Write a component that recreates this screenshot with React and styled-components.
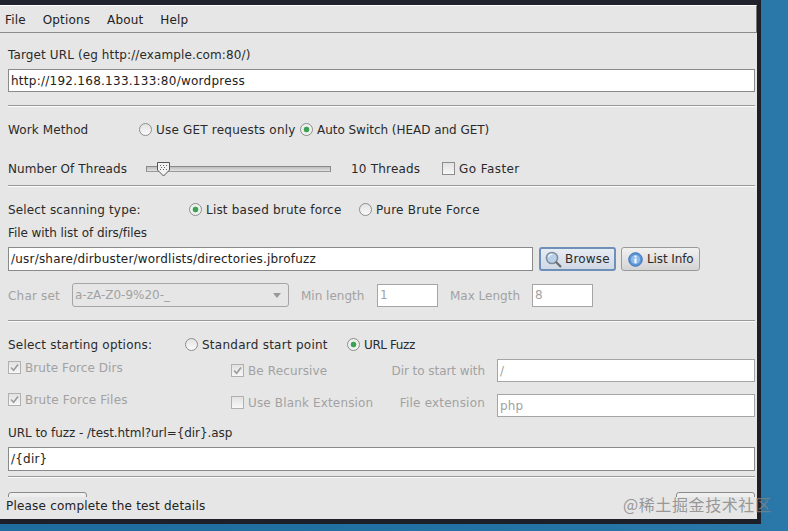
import React from "react";
import styled, { createGlobalStyle } from "styled-components";

const Global = createGlobalStyle`
  html, body { margin: 0; height: 100%; overflow: hidden; background: #2272a5; }
  body { font-family: "DejaVu Sans", sans-serif; font-size: 12px; color: #222; }
`;

const Desktop = styled.div`
  width: 788px; height: 531px; overflow: hidden;
  background: linear-gradient(90deg, #1f6c9e 0%, #2272a5 60%, #2a78a8 100%);
`;
const Frame = styled.div`
  position: relative;
  width: 757px; height: 514px; overflow: hidden;
  border-top: 5px solid #21232f;
  border-bottom: 5px solid #1d2029;
  border-right: 4px solid #1d2029;
  background: #e6e6e6;
  display: flex; flex-direction: column;
`;
const MenuBar = styled.div`
  height: 28px; box-sizing: border-box; flex: none;
  background: #e6e6e6;
  border-top: 1px solid #fff;
  border-bottom: 1px solid #8c8c8c;
  border-right: 1px solid #777;
  display: flex; align-items: center; gap: 17px; padding: 2px 0 0 5px;
  letter-spacing: 0.15px;
`;
const Content = styled.div`
  display: flex; flex-direction: column; padding: 0 2px 0 8px; flex: none;
`;
const Row = styled.div`
  display: flex; align-items: center; flex: none;
  height: ${p => p.$h || 20}px;
  margin-top: ${p => p.$mt || 0}px;
`;
const Text = styled.span`
  box-sizing: content-box;
  white-space: pre;
  padding-top: ${p => p.$pt ?? 2}px;
  letter-spacing: ${p => p.$ls ?? 0.2}px;
  color: ${p => (p.$off ? "#a2a2a2" : "#2a2a2a")};
  width: ${p => (p.$w ? `${p.$w}px` : "auto")};
  margin-left: ${p => (p.$auto ? "auto" : `${p.$ml || 0}px`)};
  padding-right: ${p => p.$pr || 0}px;
  flex: none;
`;
const Field = styled.div`
  box-sizing: border-box; height: ${p => p.$h || 24}px;
  width: ${p => (p.$w ? `${p.$w}px` : "100%")};
  flex: ${p => (p.$w ? "none" : "1")};
  background: #fff;
  border: 1px solid ${p => (p.$off ? "#a5a5a5" : "#8a8a8a")};
  color: ${p => (p.$off ? "#a2a2a2" : "#222")};
  padding-left: 2px;
  display: flex; align-items: center;
  white-space: pre; letter-spacing: ${p => p.$ls ?? 0.2}px;
`;
const Sep = styled.div`
  height: 2px; flex: none;
  margin-top: ${p => p.$mt || 0}px;
  background: linear-gradient(#999 50%, #fbfbfb 50%);
`;
const Radio = styled.span`
  box-sizing: border-box; width: 13px; height: 13px; border-radius: 50%;
  flex: none; margin-right: 4px;
  border: 1px solid #8d8d8d;
  background: ${p => p.$on
    ? "radial-gradient(circle, #3f9f55 0 2.5px, #e9f1ea 3.2px, #f3f3f3 100%)"
    : "linear-gradient(#e3e3e3, #fafafa)"};
`;
const Check = styled.span`
  box-sizing: border-box; width: 13px; height: 13px; flex: none; margin-right: 4px;
  border: 1px solid ${p => (p.$off ? "#b0b0b0" : "#8d8d8d")};
  background: linear-gradient(#e2e2e2, #f7f7f7);
  display: flex; align-items: center; justify-content: center;
`;
const Track = styled.div`
  position: relative; box-sizing: border-box; width: 185px; height: 6px; flex: none;
  border: 1px solid #8a8a8a; border-bottom-color: #9a9a9a;
  background: linear-gradient(#bdbdbd, #e2e2e2);
  margin: 1px 20px 0 0;
`;
const ThumbSpot = styled.span`
  position: absolute; left: 9px; top: -6px; display: block; line-height: 0;
`;
const Combo = styled.div`
  box-sizing: border-box; width: 217px; height: 24px; flex: none;
  border: 1px solid #a5a5a5; border-radius: 3px;
  background: #e6e6e6; color: #a2a2a2;
  display: flex; align-items: center; justify-content: space-between;
  padding: 0 7px 0 2px; letter-spacing: 0;
`;
const Caret = styled.span`
  width: 0; height: 0;
  border-left: 4px solid transparent; border-right: 4px solid transparent;
  border-top: 5px solid #999;
`;
const Btn = styled.div`
  box-sizing: border-box; height: 24px; flex: none; width: ${p => p.$w}px;
  margin-left: ${p => p.$ml}px;
  border-radius: 3px;
  border: ${p => (p.$focus ? "2px solid #6d8fb8" : "1px solid #9a9a9a")};
  background: ${p => (p.$focus
    ? "linear-gradient(#e7ecf3, #cfd9e6)"
    : "linear-gradient(#f1f1f1, #d4d4d4)")};
  display: flex; align-items: center; gap: ${p => (p.$focus ? 3 : 4)}px; padding-left: ${p => (p.$focus ? 4 : 6)}px;
  letter-spacing: ${p => p.$ls}px; color: #2a2a2a;
`;
const OptionGrid = styled.div`
  display: flex; margin-top: 3px; height: 60px; flex: none;
`;
const LeftCol = styled.div`
  display: flex; flex-direction: column; gap: 12px; width: 223px; flex: none;
`;
const RightCol = styled.div`
  display: flex; flex-direction: column; gap: 10px; padding-top: 2px; flex: 1;
`;
const OptRow = styled.div`
  display: flex; height: ${p => p.$h}px;
  align-items: ${p => p.$align};
`;
const Cell = styled.div`
  display: flex; align-items: center; height: 20px; flex: none;
  width: 266px;
`;
const Tail = styled.div`
  display: flex; flex: 1; align-self: flex-end;
`;
const Footer = styled.div`
  display: flex; justify-content: space-between; margin-top: 14px; height: 30px; flex: none;
`;
const HiddenBtn = styled.div`
  box-sizing: border-box; width: ${p => p.$w}px; height: 30px;
  border: 1px solid #8a8a8a; border-radius: 3px;
  background: linear-gradient(#f1f1f1, #d4d4d4);
`;
const Status = styled.div`
  position: absolute; left: 0; right: 0; bottom: 0; height: 22px; box-sizing: border-box;
  background: #e6e6e6; padding: 0 0 4px 6px;
  display: flex; align-items: center; letter-spacing: 0.2px; color: #222;
`;
const Watermark = styled.div`
  position: absolute; left: 623px; top: 494px;
  font-family: "Noto Sans CJK SC", sans-serif; font-size: 16px; line-height: 20px;
  letter-spacing: 0.6px;
  color: rgba(130, 130, 130, 0.8); white-space: pre;
`;

const Tick = ({ off }) => (
  <svg width="9" height="9" viewBox="0 0 9 9">
    <path d="M1 4.5 L3.6 7.2 L8 1.5" fill="none" stroke={off ? "#9a9a9a" : "#444"} strokeWidth="1.6" />
  </svg>
);
const Magnifier = () => (
  <svg width="17" height="17" viewBox="0 0 17 17">
    <circle cx="7" cy="7" r="5.6" fill="#b9d0ea" stroke="#7e8c9b" strokeWidth="1.5" />
    <path d="M3.5 6a3.5 3.5 0 0 1 4-2.5" fill="none" stroke="#f2f7fc" strokeWidth="1.2" />
    <path d="M11.2 11.2 L15.4 15.4" stroke="#6f6f6f" strokeWidth="2.2" strokeLinecap="round" />
  </svg>
);
const Info = () => (
  <svg width="15" height="15" viewBox="0 0 15 15">
    <circle cx="7.5" cy="7.5" r="6.8" fill="#5c94d6" stroke="#3f76b8" />
    <circle cx="7.5" cy="7.5" r="4.6" fill="#8fbbe8" />
    <rect x="6.5" y="6.4" width="2" height="4.8" fill="#fff" />
    <rect x="6.5" y="3.6" width="2" height="1.8" fill="#fff" />
  </svg>
);
const SliderThumb = () => (
  <svg width="15" height="16" viewBox="0 0 15 16">
    <path d="M1.5 1.5 H13.5 V9 L7.5 15 L1.5 9 Z" fill="#f2f2f2" stroke="#555" />
    <g fill="#666">
      <rect x="4" y="4" width="1" height="1" /><rect x="7" y="4" width="1" height="1" />
      <rect x="10" y="4" width="1" height="1" /><rect x="5" y="6" width="1" height="1" />
      <rect x="8" y="6" width="1" height="1" /><rect x="4" y="8" width="1" height="1" />
      <rect x="7" y="8" width="1" height="1" /><rect x="10" y="8" width="1" height="1" />
    </g>
  </svg>
);

export default function App() {
  return (
    <Desktop>
      <Global />
      <Frame>
        <MenuBar>
          <span>File</span><span>Options</span><span>About</span><span>Help</span>
        </MenuBar>
        <Content>
          <Row $mt={11}><Text $ls={0.12}>Target URL (eg http://example.com:80/)</Text></Row>
          <Row $mt={5} $h={23}><Field $h={23} $ls={0.26}>http://192.168.133.133:80/wordpress</Field></Row>
          <Sep $mt={13} />
          <Row $mt={12}>
            <Text $w={131} $ls={0.1}>Work Method</Text>
            <Radio /><Text $w={144}>Use GET requests only</Text>
            <Radio $on /><Text $ls={-0.03}>Auto Switch (HEAD and GET)</Text>
          </Row>
          <Row $mt={19}>
            <Text $w={138} $ls={0.08}>Number Of Threads</Text>
            <Track><ThumbSpot><SliderThumb /></ThumbSpot></Track>
            <Text $w={91}>10 Threads</Text>
            <Check /><Text $ls={0.42}>Go Faster</Text>
          </Row>
          <Sep $mt={7} />
          <Row $mt={12}>
            <Text $w={181} $ls={0.15}>Select scanning type:</Text>
            <Radio $on /><Text $w={153}>List based brute force</Text>
            <Radio /><Text $ls={0.26}>Pure Brute Force</Text>
          </Row>
          <Row $mt={3}><Text $ls={-0.06}>File with list of dirs/files</Text></Row>
          <Row $mt={5} $h={24}>
            <Field $w={525}>/usr/share/dirbuster/wordlists/directories.jbrofuzz</Field>
            <Btn $focus $w={77} $ml={6} $ls={0.2}><Magnifier />Browse</Btn>
            <Btn $w={79} $ml={5} $ls={-0.1}><Info />List Info</Btn>
          </Row>
          <Row $mt={12} $h={24}>
            <Text $w={64} $off>Char set</Text>
            <Combo>a-zA-Z0-9%20-_<Caret /></Combo>
            <Text $w={76} $off $ml={12} $ls={0}>Min length</Text>
            <Field $w={61} $off $h={23}>1</Field>
            <Text $w={82} $off $ml={12} $ls={0}>Max Length</Text>
            <Field $w={61} $off $h={23}>8</Field>
          </Row>
          <Sep $mt={13} />
          <Row $mt={12}>
            <Text $w={177}>Select starting options:</Text>
            <Radio /><Text $w={145} $ls={0.25}>Standard start point</Text>
            <Radio $on /><Text $ls={-0.4}>URL Fuzz</Text>
          </Row>
          <OptionGrid>
            <LeftCol>
              <Row><Check $off><Tick off /></Check><Text $off $ls={0.07}>Brute Force Dirs</Text></Row>
              <Row><Check $off><Tick off /></Check><Text $off>Brute Force Files</Text></Row>
            </LeftCol>
            <RightCol>
              <OptRow $h={23} $align="center">
                <Cell>
                  <Check $off><Tick off /></Check><Text $off $pt={0} $ls={0.12}>Be Recursive</Text>
                  <Text $off $pt={0} $auto $pr={12} $ls={-0.05}>Dir to start with</Text>
                </Cell>
                <Field $off $h={23}>/</Field>
              </OptRow>
              <OptRow $h={25} $align="flex-start">
                <Cell>
                  <Check $off /><Text $off $ls={0.15}>Use Blank Extension</Text>
                  <Text $off $auto $pr={12}>File extension</Text>
                </Cell>
                <Tail><Field $off $h={23}>php</Field></Tail>
              </OptRow>
            </RightCol>
          </OptionGrid>
          <Row $mt={5}><Text $ls={-0.06}>URL to fuzz - /test.html?url={"{dir}"}.asp</Text></Row>
          <Row $mt={5} $h={24}><Field>/{"{dir}"}</Field></Row>
          <Sep $mt={5} />
          <Footer>
            <HiddenBtn $w={79} />
            <HiddenBtn $w={79} />
          </Footer>
        </Content>
        <Status>Please complete the test details</Status>
      </Frame>
      <Watermark>@稀土掘金技术社区</Watermark>
    </Desktop>
  );
}
